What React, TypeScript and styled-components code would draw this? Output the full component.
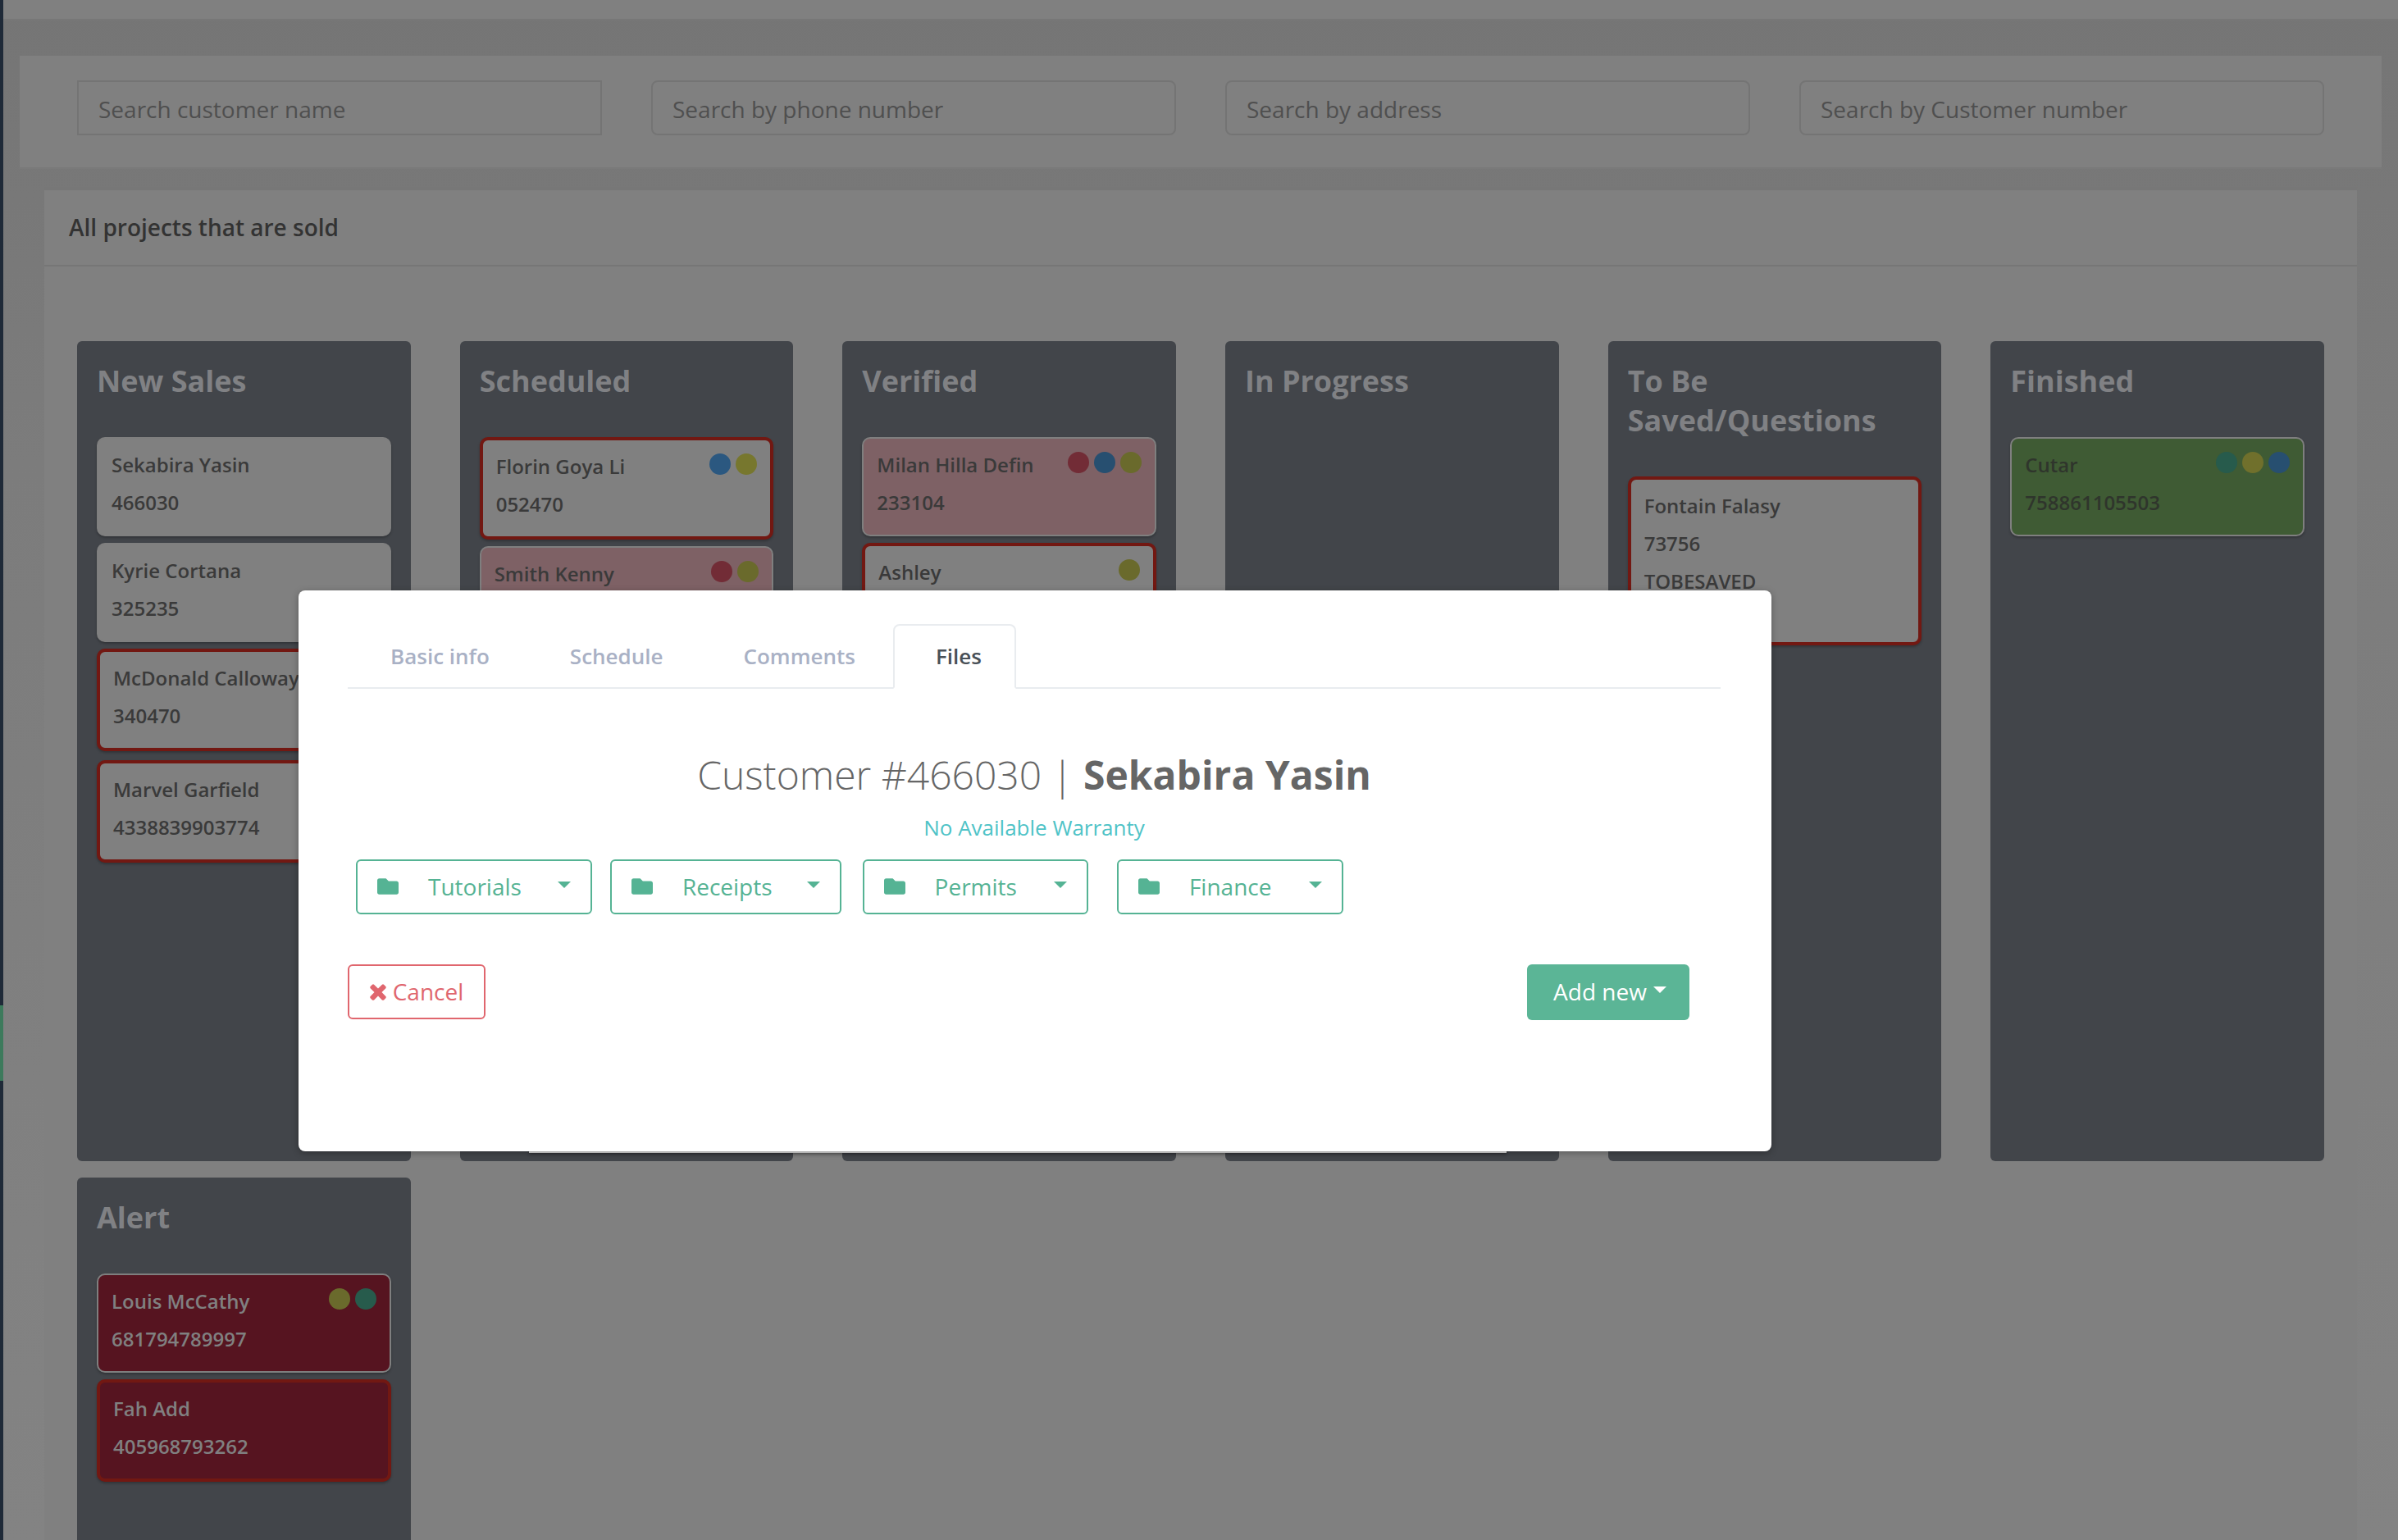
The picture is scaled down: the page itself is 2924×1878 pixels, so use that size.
import styled, { createGlobalStyle } from "styled-components";
import { FaFolder } from "react-icons/fa";

const GlobalStyle = createGlobalStyle`
  html, body {
    margin: 0;
    padding: 0;
    background: #808080;
  }
  * {
    box-sizing: border-box;
  }
  body {
    font-family: "Open Sans", "Liberation Sans", sans-serif;
  }
`;

const Page = styled.div`
  position: relative;
  width: 2924px;
  height: 1878px;
  overflow: hidden;
  display: flex;
  background: linear-gradient(180deg, #757575 0%, #7c7c7c 30%, #838383 100%);
`;

const Sidebar = styled.aside`
  width: 4px;
  flex: none;
  background: #1f2a38;
  padding-top: 1226px;
`;

const SidebarActive = styled.div`
  height: 92px;
  background: #3d7a5c;
`;

const Main = styled.main`
  flex: 1;
  min-width: 0;
`;

const TopBar = styled.div`
  height: 25px;
  background: #808080;
  border-bottom: 2px solid #777777;
`;

const SearchPanel = styled.section`
  margin: 43px 20px 0;
  height: 138px;
  padding: 30px 70px 0;
  background: #808080;
  border-bottom: 2px solid #7a7a7a;
  display: grid;
  grid-template-columns: repeat(4, 1fr);
  column-gap: 60px;
  align-items: start;
`;

const SearchBox = styled.div<{ $square?: boolean }>`
  height: 67px;
  padding: 2px 24px 0;
  display: flex;
  align-items: center;
  border: 2px solid #747474;
  border-radius: ${(props) => (props.$square ? "0" : "8px")};
  color: #4f4f4f;
  font-size: 28px;
`;

const Board = styled.section`
  margin: 22px 50px 0;
  background: #808080;
  border-top: 4px solid #777777;
`;

const BoardHeader = styled.header`
  height: 93px;
  padding: 0 30px 1px;
  display: flex;
  align-items: center;
  border-bottom: 2px solid #767676;
  color: #333333;
  font-size: 28px;
  font-weight: 600;
`;

const Columns = styled.div`
  padding: 91px 40px 0;
  display: grid;
  grid-template-columns: repeat(6, 1fr);
  column-gap: 60px;
  row-gap: 20px;
`;

const Column = styled.div`
  height: 1000px;
  padding: 25px 24px 0;
  overflow: hidden;
  background: #42454a;
  border-radius: 6px;
`;

const ColumnTitle = styled.h3`
  margin: 0 0 44px;
  color: #808184;
  font-size: 36px;
  line-height: 48px;
  font-weight: 700;
`;

const tones = {
  plain: { background: "#808080", color: "#3a3a3a" },
  pink: { background: "#7e6165", color: "#3a3a3a" },
  green: { background: "#3f5b34", color: "#2f352c" },
  alert: { background: "#561420", color: "#808080" },
};

type Tone = keyof typeof tones;

const Card = styled.div<{ $tone: Tone; $flagged?: boolean; $after?: number }>`
  margin-bottom: ${(props) => props.$after || 8}px;
  padding: 9px 16px 16px;
  border: ${(props) =>
    props.$flagged ? "4px solid #721812" : "2px solid #7f7f7f"};
  border-radius: 10px;
  background: ${(props) => tones[props.$tone].background};
  color: ${(props) => tones[props.$tone].color};
  box-shadow: 0 2px 3px rgba(0, 0, 0, 0.25);
  font-size: 24px;
  line-height: 46px;
  font-weight: 600;
`;

const NameRow = styled.div`
  display: flex;
  justify-content: space-between;
  align-items: flex-start;
  white-space: nowrap;
`;

const Dots = styled.div`
  display: flex;
  gap: 6px;
  margin: 7px 0 0 auto;
`;

const Dot = styled.span<{ $color: string }>`
  width: 26px;
  height: 26px;
  border-radius: 50%;
  background: ${(props) => props.$color};
`;

const CardNote = styled.div`
  padding-bottom: 35px;
`;

const Overlay = styled.div`
  position: absolute;
  inset: 0;
`;

const BackModal = styled.div`
  position: absolute;
  left: 645px;
  top: 1300px;
  width: 1192px;
  height: 106px;
  background: #d9d9d9;
  box-shadow: 0 1px 4px rgba(0, 0, 0, 0.4);
`;

const Modal = styled.div`
  position: absolute;
  left: 364px;
  top: 720px;
  width: 1796px;
  height: 684px;
  padding: 41px 62px 0 60px;
  background: #ffffff;
  border-radius: 8px;
  box-shadow: 0 2px 8px rgba(0, 0, 0, 0.3);
`;

const Tabs = styled.nav`
  height: 79px;
  padding-left: 4px;
  display: flex;
  border-bottom: 2px solid #e9ecef;
`;

const Tab = styled.div<{ $active?: boolean }>`
  height: 79px;
  padding: ${(props) => (props.$active ? "0 40px 2px 50px" : "0 46px 2px")};
  margin-left: ${(props) => (props.$active ? "-4px" : "0")};
  margin-right: ${(props) => (props.$active ? "0" : "2px")};
  display: flex;
  align-items: center;
  border: 2px solid ${(props) => (props.$active ? "#e9ecef" : "transparent")};
  border-bottom: 2px solid ${(props) => (props.$active ? "#ffffff" : "transparent")};
  border-radius: 8px 8px 0 0;
  color: ${(props) => (props.$active ? "#495057" : "#a9b1c5")};
  font-size: 26px;
  font-weight: 600;
`;

const Heading = styled.h2`
  margin: 77px 0 0;
  text-align: center;
  color: #666666;
  font-size: 48px;
  line-height: 56px;
  font-weight: 300;
  b {
    font-weight: 700;
  }
`;

const Warranty = styled.p`
  margin: 18px 0 0;
  text-align: center;
  color: #4fc3c7;
  font-size: 26px;
  line-height: 36px;
`;

const FolderRow = styled.div`
  margin-top: 21px;
  padding-left: 10px;
  display: flex;
`;

const FolderButton = styled.div<{ $after: number }>`
  height: 67px;
  margin-right: ${(props) => props.$after}px;
  padding: 0 24px 2px;
  display: flex;
  align-items: center;
  border: 2px solid #55b394;
  border-radius: 6px;
  color: #55b394;
  font-size: 28px;
  svg {
    flex: none;
    margin-right: 36px;
  }
`;

const Caret = styled.span<{ $gap: number; $color?: string }>`
  width: 0;
  height: 0;
  margin-left: ${(props) => props.$gap}px;
  margin-bottom: 4px;
  border-left: 8px solid transparent;
  border-right: 8px solid transparent;
  border-top: 8px solid ${(props) => props.$color || "#55b394"};
`;

const Footer = styled.div`
  margin-top: 61px;
  padding-right: 38px;
  display: flex;
  justify-content: space-between;
`;

const CancelButton = styled.div`
  width: 168px;
  height: 67px;
  padding-bottom: 2px;
  display: flex;
  align-items: center;
  justify-content: center;
  gap: 8px;
  border: 2px solid #e0666e;
  border-radius: 6px;
  color: #e0666e;
  font-size: 28px;
`;

const AddButton = styled.div`
  width: 198px;
  height: 68px;
  padding: 0 0 2px 4px;
  display: flex;
  align-items: center;
  justify-content: center;
  background: #5bb596;
  border-radius: 6px;
  color: #ffffff;
  font-size: 28px;
`;

interface CardInfo {
  name: string;
  number?: string;
  note?: string;
  tone?: Tone;
  flagged?: boolean;
  dots?: string[];
  after?: number;
}

const blue = "#2b5880";
const yellow = "#77772e";
const red = "#722c36";
const teal = "#275b4c";

const columns: { title: string; cards: CardInfo[] }[] = [
  {
    title: "New Sales",
    cards: [
      { name: "Sekabira Yasin", number: "466030" },
      { name: "Kyrie Cortana", number: "325235" },
      { name: "McDonald Calloway", number: "340470", flagged: true, after: 11 },
      { name: "Marvel Garfield", number: "4338839903774", flagged: true },
    ],
  },
  {
    title: "Scheduled",
    cards: [
      { name: "Florin Goya Li", number: "052470", flagged: true, dots: [blue, yellow] },
      { name: "Smith Kenny", tone: "pink", dots: [red, "#6a6a2c"] },
    ],
  },
  {
    title: "Verified",
    cards: [
      { name: "Milan Hilla Defin", number: "233104", tone: "pink", dots: [red, "#274f70", "#6a6a2c"] },
      { name: "Ashley", flagged: true, dots: ["#6a6a2c"] },
    ],
  },
  { title: "In Progress", cards: [] },
  {
    title: "To Be Saved/Questions",
    cards: [{ name: "Fontain Falasy", number: "73756", note: "TOBESAVED", flagged: true }],
  },
  {
    title: "Finished",
    cards: [
      { name: "Cutar", number: "758861105503", tone: "green", dots: [teal, "#70702c", "#274f70"] },
    ],
  },
  {
    title: "Alert",
    cards: [
      { name: "Louis McCathy", number: "681794789997", tone: "alert", dots: ["#6a6a2c", teal] },
      { name: "Fah Add", number: "405968793262", tone: "alert", flagged: true },
    ],
  },
];

const searches = [
  "Search customer name",
  "Search by phone number",
  "Search by address",
  "Search by Customer number",
];

const folders = [
  { label: "Tutorials", gap: 44, after: 22 },
  { label: "Receipts", gap: 42, after: 26 },
  { label: "Permits", gap: 45, after: 35 },
  { label: "Finance", gap: 46, after: 0 },
];

function CloseIcon() {
  return (
    <svg width="20" height="22" viewBox="290 230 1212 1332" fill="currentColor">
      <path d="M1490 1322q0 40-28 68l-136 136q-28 28-68 28t-68-28l-294-294-294 294q-28 28-68 28t-68-28l-136-136q-28-28-28-68t28-68l294-294-294-294q-28-28-28-68t28-68l136-136q28-28 68-28t68 28l294 294 294-294q28-28 68-28t68 28l136 136q28 28 28 68t-28 68l-294 294 294 294q28 28 28 68z" />
    </svg>
  );
}

function App() {
  return (
    <Page>
      <GlobalStyle />
      <Sidebar>
        <SidebarActive />
      </Sidebar>
      <Main>
        <TopBar />
        <SearchPanel>
          {searches.map((text, i) => (
            <SearchBox key={text} $square={i === 0}>
              {text}
            </SearchBox>
          ))}
        </SearchPanel>
        <Board>
          <BoardHeader>All projects that are sold</BoardHeader>
          <Columns>
            {columns.map((column) => (
              <Column key={column.title}>
                <ColumnTitle>{column.title}</ColumnTitle>
                {column.cards.map((card) => (
                  <Card
                    key={card.name}
                    $tone={card.tone || "plain"}
                    $flagged={card.flagged}
                    $after={card.after}
                  >
                    <NameRow>
                      {card.name}
                      {card.dots && (
                        <Dots>
                          {card.dots.map((color, i) => (
                            <Dot key={i} $color={color} />
                          ))}
                        </Dots>
                      )}
                    </NameRow>
                    {card.number && <div>{card.number}</div>}
                    {card.note && <CardNote>{card.note}</CardNote>}
                  </Card>
                ))}
              </Column>
            ))}
          </Columns>
        </Board>
      </Main>
      <Overlay>
        <BackModal />
        <Modal>
          <Tabs>
            <Tab>Basic info</Tab>
            <Tab>Schedule</Tab>
            <Tab>Comments</Tab>
            <Tab $active>Files</Tab>
          </Tabs>
          <Heading>
            Customer #466030 | <b>Sekabira Yasin</b>
          </Heading>
          <Warranty>No Available Warranty</Warranty>
          <FolderRow>
            {folders.map((folder) => (
              <FolderButton key={folder.label} $after={folder.after}>
                <FaFolder size={26} />
                {folder.label}
                <Caret $gap={folder.gap} />
              </FolderButton>
            ))}
          </FolderRow>
          <Footer>
            <CancelButton>
              <CloseIcon />
              Cancel
            </CancelButton>
            <AddButton>
              Add new
              <Caret $gap={8} $color="#ffffff" />
            </AddButton>
          </Footer>
        </Modal>
      </Overlay>
    </Page>
  );
}

export default App;
